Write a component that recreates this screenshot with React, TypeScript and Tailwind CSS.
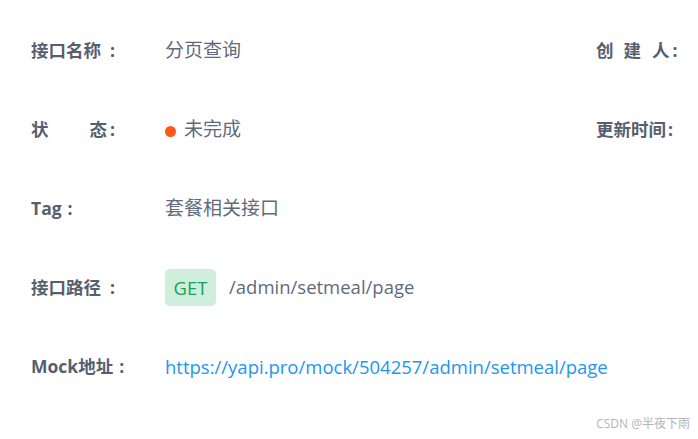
import React from "react";

const font = { fontFamily: '"Open Sans","Noto Sans CJK SC",sans-serif' };

function Label({ children }: { children: React.ReactNode }) {
  return (
    <div className="w-[134px] shrink-0 flex items-center text-[17.5px] font-bold text-[#575f6f] whitespace-nowrap">
      {children}
    </div>
  );
}

function Colon({ ml }: { ml: string }) {
  return <span className={ml}>:</span>;
}

export default function App() {
  return (
    <div
      className="relative w-[698px] h-[439px] bg-white overflow-hidden pl-[31px] pt-[11px]"
      style={font}
    >
      <div className="flex flex-col">
        <div className="flex h-[79px] items-center">
          <div className="flex flex-1 items-center">
            <Label>
              <span>接口名称</span>
              <Colon ml="ml-[9px]" />
            </Label>
            <span className="text-[19px] text-[#5f6b7c]">分页查询</span>
          </div>
          <div className="w-[102px] shrink-0 flex items-center text-[17.5px] font-bold text-[#575f6f] whitespace-nowrap">
            <span>创</span>
            <span className="ml-[10px]">建</span>
            <span className="ml-[11px]">人</span>
            <span className="ml-[3px]">:</span>
          </div>
        </div>

        <div className="flex h-[79px] items-center">
          <div className="flex flex-1 items-center">
            <Label>
              <span>状</span>
              <span className="ml-[41px]">态</span>
              <Colon ml="ml-[3px]" />
            </Label>
            <span className="w-[11px] h-[11px] rounded-full bg-[#ff561b] mt-[3px]" />
            <span className="ml-[8px] text-[19px] text-[#5f6b7c]">未完成</span>
          </div>
          <div className="w-[102px] shrink-0 flex items-center text-[17.5px] font-bold text-[#575f6f] whitespace-nowrap">
            <span>更新时间</span>
            <span className="ml-[2px]">:</span>
          </div>
        </div>

        <div className="flex h-[79px] items-center">
          <Label>
            <span>Tag</span>
            <span className="ml-[6px]">:</span>
          </Label>
          <span className="text-[19px] text-[#5f6b7c]">套餐相关接口</span>
        </div>

        <div className="flex h-[79px] items-center">
          <Label>
            <span>接口路径</span>
            <Colon ml="ml-[9px]" />
          </Label>
          <span className="w-[51px] h-[37px] rounded-[5px] bg-[#cfefdc] text-[#16a35a] text-[18.5px] flex items-center justify-center">
            GET
          </span>
          <span className="ml-[13px] text-[18.5px] text-[#5f6b7c] -mt-[2px]">/admin/setmeal/page</span>
        </div>

        <div className="flex h-[79px] items-center">
          <Label>
            <span>Mock地址</span>
            <Colon ml="ml-[6px]" />
          </Label>
          <span className="text-[18.5px] text-[#2395f1]">https://yapi.pro/mock/504257/admin/setmeal/page</span>
        </div>
      </div>

      <div className="absolute right-[8px] bottom-[6px] text-[12px] text-[#b4b4b4]" style={font}>
        CSDN @半夜下雨
      </div>
    </div>
  );
}
